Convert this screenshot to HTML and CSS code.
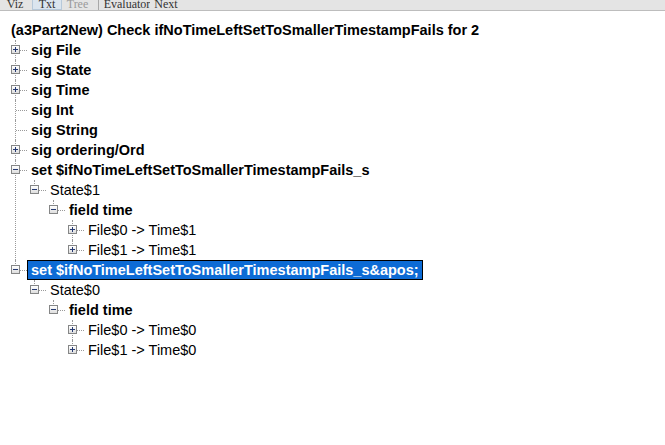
FILE: index.html
```html
<!DOCTYPE html>
<html>
<head>
<meta charset="utf-8">
<link rel="stylesheet" href="styles.css">
</head>
<body>
<div class="toolbar">
  <span class="tb-btn b-viz"><span class="tb-text">Viz</span></span>
  <span class="tb-btn b-txt active"><span class="tb-text">Txt</span></span>
  <span class="tb-btn b-tree disabled"><span class="tb-text">Tree</span></span>
  <span class="tb-sep"></span>
  <span class="tb-btn b-eval"><span class="tb-text">Evaluator</span></span>
  <span class="tb-btn b-next"><span class="tb-text">Next</span></span>
</div>
<div class="tree">
  <div class="title">(a3Part2New) Check ifNoTimeLeftSetToSmallerTimestampFails for 2</div>
  <ul class="lvl1">
    <li><div class="row"><span class="box plus"></span><span class="label">sig File</span></div></li>
    <li><div class="row"><span class="box plus"></span><span class="label">sig State</span></div></li>
    <li><div class="row"><span class="box plus"></span><span class="label">sig Time</span></div></li>
    <li><div class="row"><span class="nobox"></span><span class="label">sig Int</span></div></li>
    <li><div class="row"><span class="nobox"></span><span class="label">sig String</span></div></li>
    <li><div class="row"><span class="box plus"></span><span class="label">sig ordering/Ord</span></div></li>
    <li><div class="row"><span class="box minus"></span><span class="label">set $ifNoTimeLeftSetToSmallerTimestampFails_s</span></div>
      <ul>
        <li class="last"><div class="row"><span class="box minus"></span><span class="label plain">State$1</span></div>
          <ul>
            <li class="last"><div class="row"><span class="box minus"></span><span class="label">field time</span></div>
              <ul>
                <li><div class="row"><span class="box plus"></span><span class="label plain">File$0 -&gt; Time$1</span></div></li>
                <li class="last"><div class="row"><span class="box plus"></span><span class="label plain">File$1 -&gt; Time$1</span></div></li>
              </ul>
            </li>
          </ul>
        </li>
      </ul>
    </li>
    <li class="last"><div class="row"><span class="box minus"></span><span class="label selected">set $ifNoTimeLeftSetToSmallerTimestampFails_s&amp;apos;</span></div>
      <ul>
        <li class="last"><div class="row"><span class="box minus"></span><span class="label plain">State$0</span></div>
          <ul>
            <li class="last"><div class="row"><span class="box minus"></span><span class="label">field time</span></div>
              <ul>
                <li><div class="row"><span class="box plus"></span><span class="label plain">File$0 -&gt; Time$0</span></div></li>
                <li class="last"><div class="row"><span class="box plus"></span><span class="label plain">File$1 -&gt; Time$0</span></div></li>
              </ul>
            </li>
          </ul>
        </li>
      </ul>
    </li>
  </ul>
</div>
</body>
</html>
```
FILE: styles.css
```css
html, body {
  margin: 0;
  padding: 0;
  background: #ffffff;
}
body {
  font-family: "Liberation Sans", Arial, sans-serif;
  color: #000;
}
.toolbar {
  height: 10px;
  background: #e4e4e4;
  border-bottom: 1px solid #bdbdbd;
  display: flex;
  align-items: flex-end;
  overflow: hidden;
  padding-left: 2px;
}
.tb-btn {
  height: 10px;
  box-sizing: border-box;
  display: flex;
  align-items: flex-end;
  justify-content: center;
  border: 1px solid transparent;
  border-top: 0;
  flex: none;
  overflow: hidden;
}
.tb-text {
  font-family: "Liberation Serif", serif;
  font-size: 12px;
  line-height: 12px;
  color: #333;
  margin-bottom: -1px;
}
.b-viz { width: 26px; margin-right: 4px; }
.b-txt { width: 30px; margin-right: 2px; }
.b-tree { width: 27px; }
.b-eval { width: 48px; margin-right: 2px; }
.b-next { width: 26px; }
.tb-btn.active {
  background: #dbe5ef;
  border-color: #b7c9da;
}
.tb-btn.disabled .tb-text {
  color: #9a9a9a;
}
.tb-sep {
  width: 1px;
  height: 10px;
  background: #a8a8a8;
  margin: 0 4px 0 7px;
  flex: none;
}
.tree {
  padding: 9px 0 0 11px;
}
.title {
  font-weight: bold;
  font-size: 14.5px;
  height: 20px;
  line-height: 20px;
  white-space: nowrap;
}
ul {
  list-style: none;
  margin: 0;
  padding: 0;
}
ul ul {
  padding-left: 19px;
}
li {
  position: relative;
}
li::before {
  content: "";
  position: absolute;
  left: 4px;
  top: 0;
  bottom: 0;
  border-left: 1px dotted #9a9a9a;
}
li.last::before {
  bottom: auto;
  height: 10px;
}
li::after {
  content: "";
  position: absolute;
  left: 5px;
  top: 10px;
  width: 11px;
  border-top: 1px dotted #9a9a9a;
}
.row {
  display: flex;
  align-items: center;
  height: 20px;
  position: relative;
  z-index: 1;
}
.box, .nobox {
  width: 9px;
  height: 9px;
  box-sizing: border-box;
  margin-right: 7px;
  flex: none;
  position: relative;
  top: -1px;
}
.box {
  border: 1px solid #858686;
  background: linear-gradient(#ffffff, #dedede);
}
.box::before {
  content: "";
  position: absolute;
  left: 1px;
  top: 3px;
  width: 5px;
  height: 1px;
  background: #263a72;
}
.box.plus::after {
  content: "";
  position: absolute;
  left: 3px;
  top: 1px;
  width: 1px;
  height: 5px;
  background: #263a72;
}
.label {
  font-size: 14.5px;
  font-weight: bold;
  line-height: 18px;
  height: 18px;
  padding: 0 3px;
  border: 1px solid transparent;
  white-space: nowrap;
}
.label.plain {
  font-weight: normal;
}
.label.selected {
  background: #0d6bd5;
  border-color: #000;
  color: #fff;
}
```
